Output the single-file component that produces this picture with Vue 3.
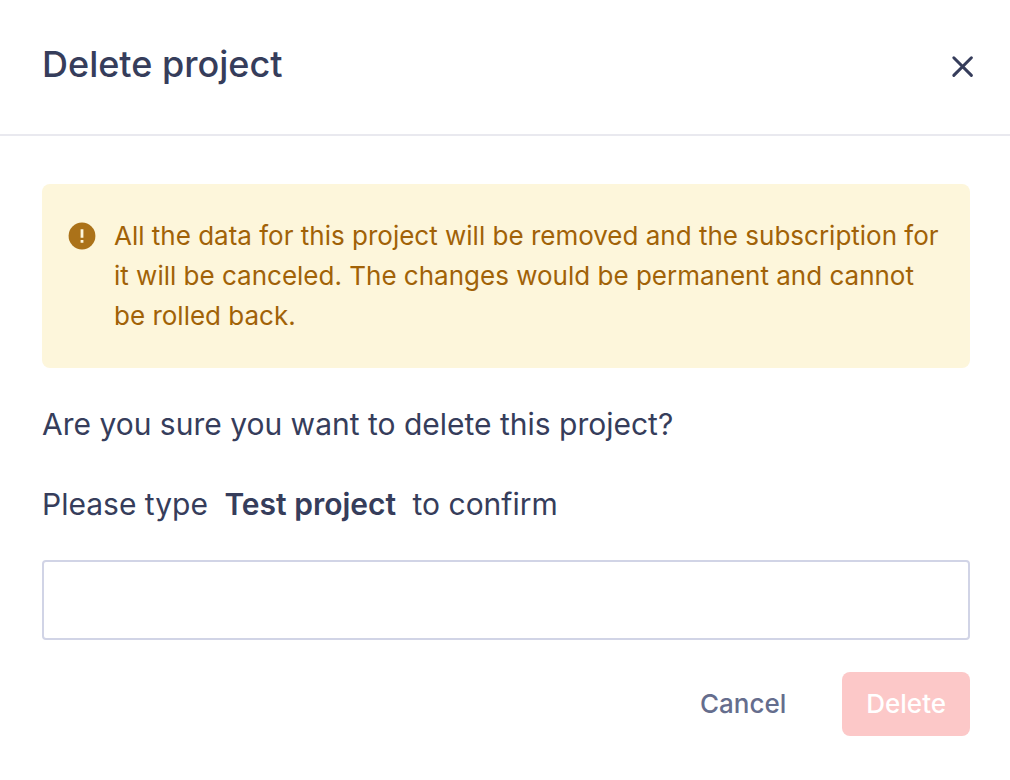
<script setup>
import { ref } from 'vue'

const projectName = 'Test project'
const typed = ref('')
</script>

<template>
  <section class="dialog" role="dialog" aria-labelledby="dialog-title">
    <header class="head">
      <h1 id="dialog-title">Delete project</h1>
      <button class="close" type="button" aria-label="Close">
        <svg viewBox="0 0 24 24" width="24" height="24" aria-hidden="true">
          <path d="M3.8 3.8 21.4 21.4M21.4 3.8 3.8 21.4" fill="none" stroke="currentColor" stroke-width="3" stroke-linecap="round" />
        </svg>
      </button>
    </header>
    <form class="body" @submit.prevent>
      <div class="alert" role="alert">
        <svg viewBox="0 0 28 28" width="28" height="28" aria-hidden="true">
          <circle cx="14" cy="14" r="13.4" fill="#ab7219" />
          <path d="M12.6 7.2h2.8v8.6h-2.8zM12.6 18h2.8v2.8h-2.8z" fill="#fdf6db" />
        </svg>
        <p>All the data for this project will be removed and the subscription for it will be canceled. The changes would be permanent and cannot be rolled back.</p>
      </div>
      <p class="question">Are you sure you want to delete this project?</p>
      <label class="prompt" for="confirm-name">Please type <strong>{{ projectName }}</strong> to confirm</label>
      <input id="confirm-name" v-model="typed" type="text" autocomplete="off" />
      <div class="actions">
        <button class="cancel" type="button">Cancel</button>
        <button class="delete" type="submit" :disabled="typed !== projectName">Delete</button>
      </div>
    </form>
  </section>
</template>

<style>
body {
  background: #fff;
}
</style>

<style scoped>
.dialog {
  font-family: Inter, "Liberation Sans", sans-serif;
  color: #363d5b;
}
h1,
p {
  margin: 0;
}
.head {
  display: flex;
  align-items: center;
  justify-content: space-between;
  padding: 40px 36px 46px 42px;
  border-bottom: 2px solid #e9e9ef;
}
h1 {
  font-size: 36px;
  line-height: 48px;
  font-weight: 500;
}
.close {
  display: flex;
  padding: 4px 0 0;
  border: 0;
  background: none;
  color: #363d5b;
}
.body {
  display: flex;
  flex-direction: column;
  padding: 48px 40px 44px 42px;
}
.alert {
  display: flex;
  gap: 18px;
  padding: 32px 26px;
  border-radius: 8px;
  background: #fdf6db;
  color: #a16207;
  font-size: 26px;
  line-height: 40px;
}
.alert svg {
  flex: none;
  margin-top: 6px;
}
.question,
.prompt {
  font-size: 30px;
  line-height: 40px;
}
.question {
  margin-top: 36px;
}
.prompt {
  margin-top: 40px;
}
strong {
  margin: 0 8px;
  font-weight: 600;
}
input {
  box-sizing: border-box;
  width: 100%;
  height: 80px;
  margin-top: 36px;
  padding: 0 24px;
  border: 2px solid #d1d4e6;
  border-radius: 4px;
  background: #fff;
  color: inherit;
  font: inherit;
  font-size: 28px;
}
.actions {
  display: flex;
  justify-content: flex-end;
  gap: 32px;
  margin-top: 32px;
}
.actions button {
  padding: 0 24px;
  border: 0;
  border-radius: 8px;
  background: none;
  font-family: inherit;
  font-size: 26px;
  font-weight: 500;
  line-height: 64px;
}
.actions .cancel {
  color: #656d8d;
}
.actions .delete {
  background: #fcc8c8;
  color: #fff;
}
</style>
